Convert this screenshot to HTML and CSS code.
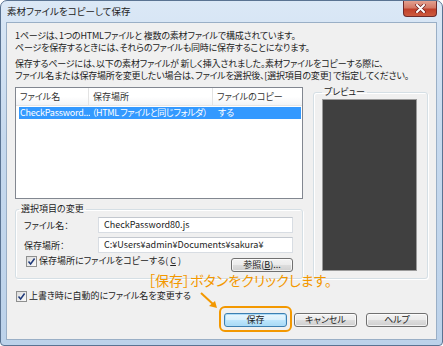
FILE: index.html
```html
<!DOCTYPE html>
<html lang="ja">
<head>
    <meta charset="UTF-8">
    <title>素材ファイルをコピーして保存</title>
    <link rel="stylesheet" href="styles.css">
</head>
<body>

<div class="window">
    <div class="titlebar">
        <span class="title">素材ファイルをコピーして保存</span>
        <div class="close">
            <svg width="13" height="9" viewBox="0 0 13 9"><path d="M3 1 L10 8 M10 1 L3 8" stroke="#6b2020" stroke-width="3.4" stroke-linecap="round"/><path d="M3 1 L10 8 M10 1 L3 8" stroke="#fff" stroke-width="2" stroke-linecap="round"/></svg>
        </div>
    </div>

    <div class="client">
        <p class="intro">1ページは、1つのHTMLファイルと 複数の素材ファイルで構成されています。<br>ページを保存するときには、それらのファイルも同時に保存することになります。</p>
        <p class="intro">保存するページには、以下の素材ファイルが 新しく挿入されました。素材ファイルをコピーする際に、<br>ファイル名または保存場所を変更したい場合は、ファイルを選択後、[選択項目の変更] で指定してください。</p>

        <div class="main">
            <div class="left">
                <div class="list">
                    <div class="list-head">
                        <span class="col c1">ファイル名</span>
                        <span class="col c2">保存場所</span>
                        <span class="col c3">ファイルのコピー</span>
                    </div>
                    <div class="list-row selected">
                        <span class="col c1">CheckPassword...</span>
                        <span class="col c2">（HTML ファイルと同じフォルダ）</span>
                        <span class="col c3">する</span>
                    </div>
                </div>

                <fieldset class="group">
                    <legend>選択項目の変更</legend>
                    <div class="field">
                        <label>ファイル名：</label>
                        <div class="input">CheckPassword80.js</div>
                    </div>
                    <div class="field">
                        <label>保存場所：</label>
                        <div class="input">C:¥Users¥admin¥Documents¥sakura¥</div>
                    </div>
                    <div class="field check-row">
                        <span class="check">
                            <span class="box"><svg width="9" height="9" viewBox="0 0 9 9"><path d="M1.5 4.5 L3.6 7 L7.6 1.5" fill="none" stroke="#1f3a7a" stroke-width="1.5"/></svg></span>
                            保存場所にファイルをコピーする(<u>C</u>)
                        </span>
                        <div class="btn small">参照(<u>B</u>)...</div>
                    </div>
                </fieldset>
            </div>

            <fieldset class="preview">
                <legend>プレビュー</legend>
                <div class="preview-box"></div>
            </fieldset>
        </div>

        <div class="rename">
            <span class="check">
                <span class="box"><svg width="9" height="9" viewBox="0 0 9 9"><path d="M1.5 4.5 L3.6 7 L7.6 1.5" fill="none" stroke="#1f3a7a" stroke-width="1.5"/></svg></span>
                上書き時に自動的にファイル名を変更する
            </span>
        </div>

        <div class="buttons">
            <div class="btn default">保存</div>
            <div class="btn">キャンセル</div>
            <div class="btn">ヘルプ</div>
        </div>

        <!-- annotation over the dialog -->
        <div class="note">［保存］ボタンをクリックします。</div>
        <svg class="arrow" width="22" height="20" viewBox="0 0 22 20">
            <path d="M2 2 L15 14" stroke="#f39800" stroke-width="2"/>
            <path d="M18 17 L10 15 L16 10 Z" fill="#f39800"/>
        </svg>
        <div class="ring"></div>
    </div>
</div>

</body>
</html>
```

FILE: styles.css
```css
body {
    margin: 0;
    padding: 0;
    font-family: "Noto Sans CJK JP", "Noto Sans", sans-serif;
    font-size: 9px;
    color: #222;
    background: #fff;
}

.window {
    width: 443px;
    height: 346px;
    box-sizing: border-box;
    border: 1px solid #5a7392;
    border-radius: 7px 7px 4px 4px;
    background: linear-gradient(180deg, #dbe8f6 0%, #c6d9ee 40%, #bcd2ea 100%);
    overflow: hidden;
}

.titlebar {
    height: 21px;
    display: flex;
    justify-content: space-between;
    align-items: flex-start;
    padding-left: 6px;
}

.title {
    line-height: 20px;
    font-size: 9.5px;
    font-feature-settings: "palt";
}

.close {
    width: 32px;
    height: 15px;
    margin-right: 5px;
    border: 1px solid #6d2a2a;
    border-top: none;
    border-radius: 0 0 4px 4px;
    background: linear-gradient(180deg, #e3a08f 0%, #d47966 45%, #c0402a 55%, #cc5a3e 100%);
    display: flex;
    align-items: center;
    justify-content: center;
}

.client {
    position: relative;
    height: 318px;
    margin: 0 5px;
    box-sizing: border-box;
    border: 1px solid #9aafc6;
    background: #f0f0f0;
    padding: 7px 8px 0 8px;
}

.intro {
    margin: 0;
    line-height: 12px;
    font-feature-settings: "palt";
    letter-spacing: -0.2px;
    white-space: nowrap;
}

.intro + .intro {
    margin-top: 4px;
}

.main {
    display: flex;
    gap: 10px;
    margin-top: 5px;
}

.left {
    width: 288px;
}

.list {
    height: 112px;
    box-sizing: border-box;
    border: 1px solid #828790;
    background: #fff;
}

.list-head {
    display: flex;
    height: 17px;
    border-bottom: 1px solid #e5e5e5;
    background: linear-gradient(180deg, #fff 0%, #fff 50%, #f3f4f6 100%);
    line-height: 17px;
}

.list-head .col {
    border-right: 1px solid #e3e3e3;
    color: #333;
}

.col {
    padding-left: 4px;
    box-sizing: border-box;
    white-space: nowrap;
    overflow: hidden;
    font-feature-settings: "palt";
}

.c1 { width: 73px; }
.c2 { width: 124px; }
.c3 { flex: 1; border-right: none !important; }

.list-row {
    display: flex;
    height: 12px;
    line-height: 12px;
    margin: 1px 1px 0 3px;
}

.list-row .c1 {
    width: 71px;
    padding-left: 1px;
    letter-spacing: -0.2px;
}

.list-row .c2 {
    padding-left: 2px;
    letter-spacing: -0.4px;
}

.selected {
    background: #3399ff;
    color: #fff;
}

fieldset {
    margin: 0;
    border: 1px solid #d5dfe5;
    border-radius: 3px;
    box-shadow: inset 1px 1px 0 #fff, 1px 1px 0 #fff;
}

legend {
    padding: 0 2px;
    line-height: 12px;
    font-feature-settings: "palt";
}

.group {
    margin-top: 4px;
    padding: 2px 9px 6px 8px;
}

.group legend {
    margin-left: -5px;
}

.field {
    display: flex;
    align-items: center;
    height: 16px;
    margin-bottom: 4px;
}

.field label {
    width: 74px;
    font-feature-settings: "palt";
}

.input {
    flex: 1;
    height: 16px;
    box-sizing: border-box;
    border: 1px solid #d8dde3;
    border-top-color: #c3c8cf;
    background: #fff;
    line-height: 14px;
    padding-left: 5px;
    font-feature-settings: "palt";
}

.check-row {
    justify-content: space-between;
    height: 17px;
    margin: -2px 0 0 2px;
    align-items: flex-start;
}

.check {
    display: flex;
    align-items: center;
    gap: 2px;
    line-height: 12px;
    font-feature-settings: "palt";
}

.box {
    width: 9px;
    height: 9px;
    border: 1px solid #8e8f8f;
    background: linear-gradient(135deg, #dcdcdc, #fafafa);
    display: flex;
}

.btn {
    height: 14px;
    box-sizing: border-box;
    border: 1px solid #707070;
    border-radius: 3px;
    background: linear-gradient(180deg, #f3f3f3 0%, #ebebeb 48%, #dddddd 52%, #cfcfcf 100%);
    box-shadow: inset 0 0 0 1px rgba(255, 255, 255, 0.7);
    text-align: center;
    line-height: 12px;
    font-feature-settings: "palt";
}

.small {
    width: 62px;
    margin-top: 3px;
}

.btn u {
    text-decoration-thickness: 1px;
}

.preview {
    width: 115px;
    height: 193px;
    box-sizing: border-box;
    margin-top: -1px;
    padding: 1px 10px 0 8px;
}

.preview legend {
    margin-left: 0;
}

.preview-box {
    height: 172px;
    background: #404040;
    border: 1px solid #9a9a9a;
    box-sizing: border-box;
}

.rename {
    margin-top: 11px;
    margin-left: 1px;
    height: 12px;
}

.buttons {
    display: flex;
    justify-content: flex-end;
    margin-top: 11px;
}

.buttons .btn {
    width: 63px;
    margin-left: 7px;
}

.buttons .btn:last-child {
    width: 62px;
    margin-left: 9px;
}

.btn.default {
    border-color: #3c7fb1;
    background: linear-gradient(180deg, #eaf6fd 0%, #d9f0fc 48%, #bee6fd 52%, #a7d9f5 100%);
    box-shadow: inset 0 0 0 1px #aedcf7;
}

.note {
    position: absolute;
    left: 141px;
    top: 249px;
    color: #f39800;
    font-size: 14px;
    line-height: 17px;
    font-feature-settings: "palt";
    white-space: nowrap;
}

.arrow {
    position: absolute;
    left: 192px;
    top: 268px;
}

.ring {
    position: absolute;
    left: 212px;
    top: 283px;
    width: 73px;
    height: 26px;
    box-sizing: border-box;
    border: 2px solid #f39800;
    border-radius: 6px;
}
```
